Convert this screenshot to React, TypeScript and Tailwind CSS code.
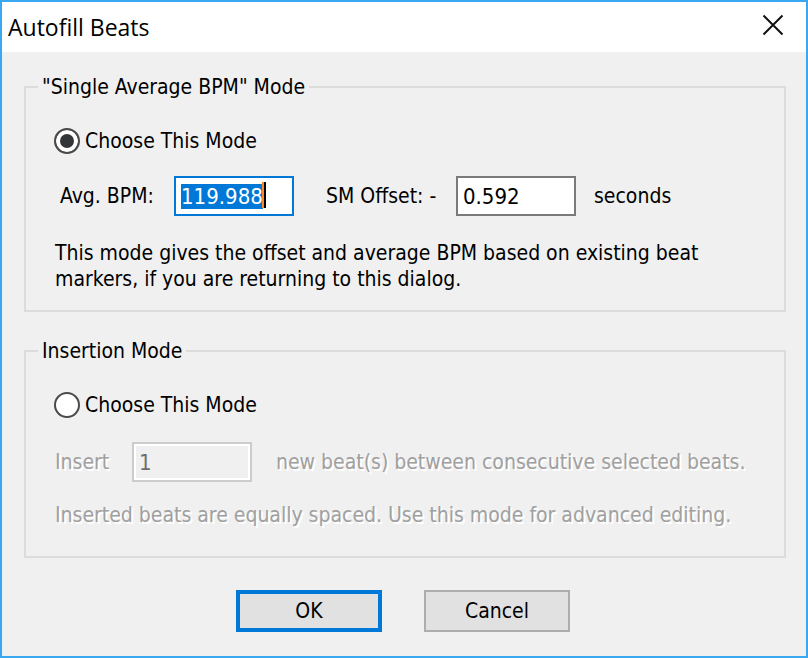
import { useEffect, useRef, useState } from 'react';

const radioClass =
  'size-[26px] shrink-0 appearance-none rounded-full border-2 border-[#4a4a4a] bg-white checked:bg-[#333639] checked:shadow-[inset_0_0_0_4px_white] outline-none';

const fieldClass = 'h-10 w-[120px] shrink-0 border-2 px-[5px] text-[22px] leading-[26px] outline-none';

const etched = 'text-[#a0a0a0] [text-shadow:2px_2px_0_#ffffff]';

export default function App() {
  const [mode, setMode] = useState('average');
  const [bpm, setBpm] = useState('119.988');
  const [offset, setOffset] = useState('0.592');
  const bpmRef = useRef<HTMLInputElement>(null);

  useEffect(() => {
    bpmRef.current?.focus();
    bpmRef.current?.select();
  }, []);

  return (
    <main className="flex min-h-screen flex-col border-2 border-[#3aa8f0] bg-[#f0f0f0] font-['DejaVu_Sans_Condensed','Noto_Sans',sans-serif] text-[21px] leading-[26px] text-black">
      <header className="flex h-[50px] items-center justify-between bg-white pr-[22px] pl-[6px]">
        <h1 className="font-['Open_Sans',sans-serif] text-[23px]">Autofill Beats</h1>
        <button type="button" aria-label="Close" className="flex pb-1">
          <svg width="22" height="22" viewBox="0 0 22 22" fill="none" stroke="#111111" strokeWidth="2">
            <path d="M1.5 1.5 20.5 20.5M20.5 1.5 1.5 20.5" />
          </svg>
        </button>
      </header>

      <form className="flex flex-col pt-[22px] pr-5 pb-6 pl-[22px]" onSubmit={(e) => e.preventDefault()}>
        <fieldset className="min-w-0 border-2 border-[#dcdcdc] px-7 pt-7 pb-[18px]">
          <legend className="-ml-4 px-1">&quot;Single Average BPM&quot; Mode</legend>
          <label className="flex items-center gap-[5px]">
            <input type="radio" name="mode" className={radioClass} checked={mode === 'average'} onChange={() => setMode('average')} />
            Choose This Mode
          </label>
          <div className="mt-[22px] flex items-center pl-[6px]">
            <label htmlFor="bpm" className="w-[114px]">Avg. BPM:</label>
            <div className="relative flex">
              <input
                id="bpm"
                ref={bpmRef}
                value={bpm}
                onChange={(e) => setBpm(e.target.value)}
                className={`${fieldClass} border-[#0078d7] bg-white selection:bg-[#0078d7] selection:text-white`}
              />
              <span className="absolute top-[6px] left-[88px] h-[26px] w-1 border-r-2 border-black bg-[#ff8728]" />
            </div>
            <label htmlFor="offset" className="ml-8 w-[130px] whitespace-nowrap">SM Offset: -</label>
            <input
              id="offset"
              value={offset}
              onChange={(e) => setOffset(e.target.value)}
              className={`${fieldClass} border-[#7a7a7a] bg-white`}
            />
            <span className="ml-[18px]">seconds</span>
          </div>
          <p className="mt-6 pl-px">
            This mode gives the offset and average BPM based on existing beat markers, if you are returning to this dialog.
          </p>
        </fieldset>

        <fieldset className="mt-[26px] min-w-0 border-2 border-[#dcdcdc] px-7 pt-7 pb-7">
          <legend className="-ml-4 px-1">Insertion Mode</legend>
          <label className="flex items-center gap-[5px]">
            <input type="radio" name="mode" className={radioClass} checked={mode === 'insert'} onChange={() => setMode('insert')} />
            Choose This Mode
          </label>
          <div className={`mt-6 flex items-center pl-px ${etched}`}>
            <label htmlFor="count" className="w-[77px] shrink-0">Insert</label>
            <input
              id="count"
              defaultValue="1"
              disabled
              className={`${fieldClass} border-[#cccccc] bg-[#f0f0f0] text-[#6d6d6d] shadow-[inset_0_0_0_2px_white] [text-shadow:none]`}
            />
            <span className="ml-6">new beat(s) between consecutive selected beats.</span>
          </div>
          <p className={`mt-5 pl-px ${etched}`}>
            Inserted beats are equally spaced. Use this mode for advanced editing.
          </p>
        </fieldset>

        <div className="mt-8 flex justify-center gap-[42px] pr-1">
          <button type="submit" className="h-[42px] w-[146px] border-4 border-[#0078d7] bg-[#e1e1e1]">OK</button>
          <button type="button" className="h-[42px] w-[146px] border-2 border-[#adadad] bg-[#e1e1e1]">Cancel</button>
        </div>
      </form>
    </main>
  );
}
